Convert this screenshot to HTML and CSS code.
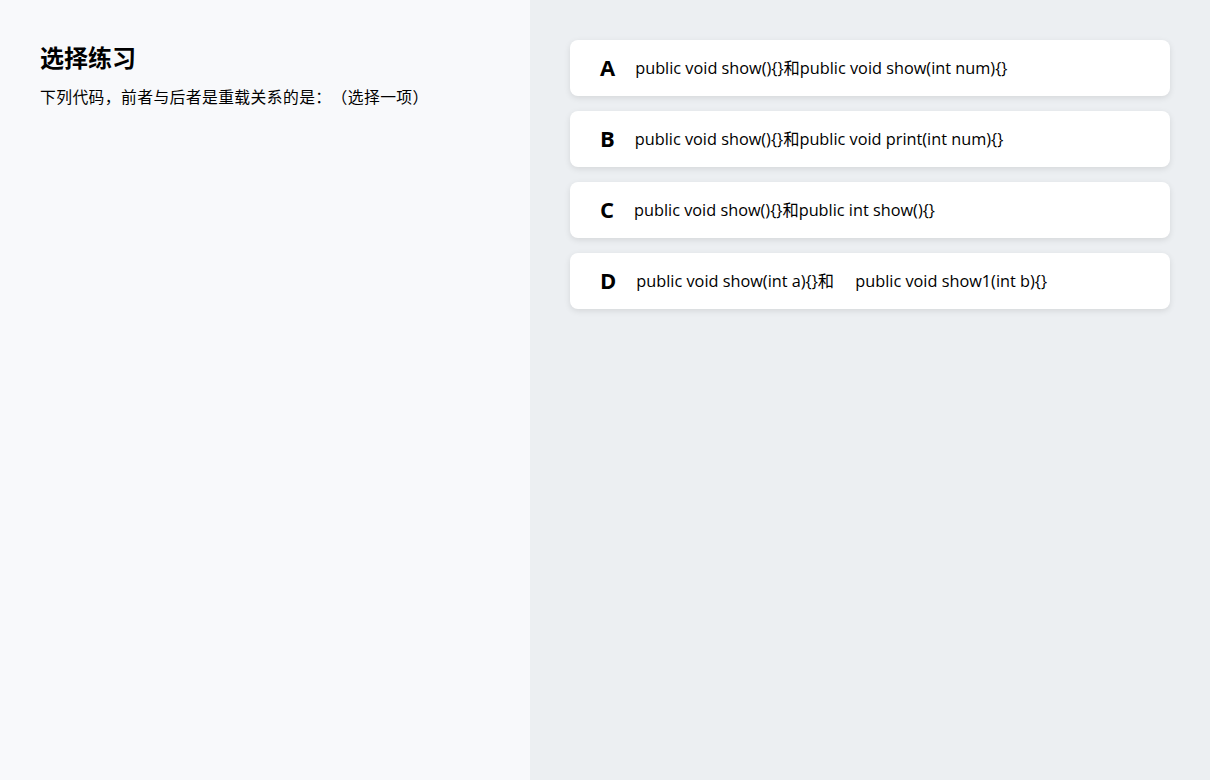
FILE: index.html
```html
<!DOCTYPE html>
<html lang="zh">
<head>
<meta charset="utf-8">
<title>选择练习</title>
<link rel="stylesheet" href="styles.css">
</head>
<body>
<div class="page">
  <section class="question">
    <h1 class="title">选择练习</h1>
    <p class="prompt">下列代码，前者与后者是重载关系的是：（选择一项）</p>
  </section>
  <section class="options">
    <div class="option"><span class="letter">A</span><span class="text">public void show(){}和public void show(int num){}</span></div>
    <div class="option"><span class="letter">B</span><span class="text">public void show(){}和public void print(int num){}</span></div>
    <div class="option"><span class="letter">C</span><span class="text">public void show(){}和public int show(){}</span></div>
    <div class="option"><span class="letter">D</span><span class="text">public void show(int a){}和     public void show1(int b){}</span></div>
  </section>
</div>
</body>
</html>
```
FILE: styles.css
```css
* { box-sizing: border-box; }
html, body { margin: 0; padding: 0; height: 100%; }
body {
  font-family: "Open Sans", "Noto Sans CJK SC", sans-serif;
  color: #000;
}
.page {
  display: flex;
  height: 780px;
}
.question {
  width: 530px;
  background: #f8f9fb;
  padding: 40px 40px;
}
.title {
  margin: 0;
  font-size: 24px;
  font-weight: 700;
  line-height: 34px;
  font-family: "Noto Sans CJK SC", sans-serif;
}
.prompt {
  margin: 13px 0 0;
  font-size: 15.8px;
  line-height: 20px;
  letter-spacing: 0.4px;
  font-family: "Noto Sans CJK SC", sans-serif;
  text-spacing-trim: space-all;
}
.options {
  flex: 1;
  background: #eceff2;
  padding: 40px 40px;
  display: flex;
  flex-direction: column;
  gap: 15px;
}
.option {
  width: 600px;
  height: 56px;
  background: #fff;
  border-radius: 8px;
  box-shadow: 0 2px 6px rgba(0, 0, 0, 0.1);
  display: flex;
  align-items: center;
  padding: 0 30px;
}
.letter {
  font-size: 22px;
  font-weight: 700;
  margin-right: 20px;
  line-height: 1;
  position: relative;
  top: -1px;
}
.text {
  font-size: 16.3px;
  white-space: pre;
  position: relative;
  top: -1px;
}
```
